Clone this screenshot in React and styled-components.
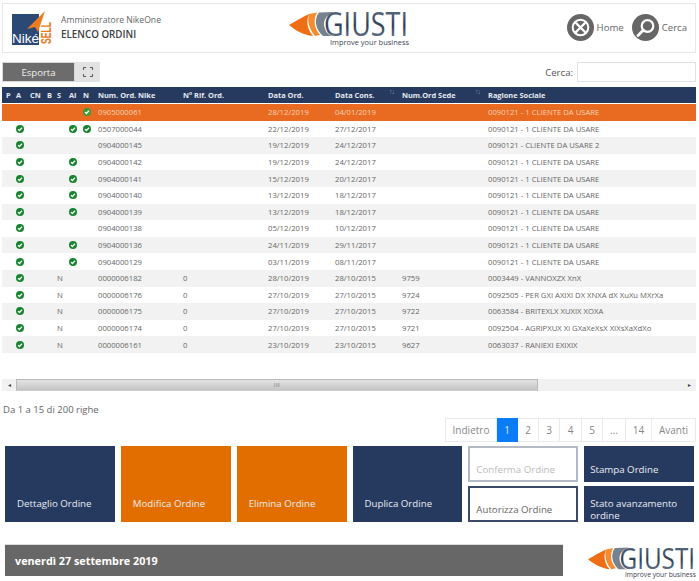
import React from 'react';
import styled, { createGlobalStyle } from 'styled-components';

const GlobalStyle = createGlobalStyle`
  html, body {
    margin: 0;
    padding: 0;
    background: #fff;
    overflow: hidden;
    font-family: "Open Sans", "Liberation Sans", sans-serif;
  }
  * { box-sizing: border-box; }
`;

const Page = styled.div`
  width: 699px;
  height: 581px;
  padding-top: 3px;
  overflow: hidden;
`;

const Header = styled.header`
  margin: 0 3px 0 2px;
  height: 50px;
  border: 1px solid #e8e8e8;
  display: grid;
  grid-template-columns: 1fr auto 1fr;
  align-items: center;
`;

const Brand = styled.div`
  display: flex;
  align-items: center;
  gap: 7px;
  padding-left: 9px;
`;

const UserInfo = styled.div`
  display: flex;
  flex-direction: column;
  gap: 2px;
  margin-top: -2px;
`;

const UserName = styled.div`
  font-size: 8.6px;
  line-height: 12px;
  color: #666;
`;

const PageTitle = styled.div`
  font-size: 9.8px;
  line-height: 13px;
  font-weight: 600;
  color: #3c4043;
`;

const HeaderNav = styled.nav`
  display: flex;
  justify-content: flex-end;
  align-items: center;
  gap: 8px;
  padding-right: 8px;
  margin-top: -1px;
`;

const NavItem = styled.a`
  display: flex;
  align-items: center;
  gap: 3px;
  font-size: 9.6px;
  color: #666;
`;

const Toolbar = styled.div`
  margin: 9px 3px 0 2px;
  height: 20px;
  display: flex;
  align-items: stretch;
`;

const ExportButton = styled.button`
  width: 73px;
  border: 1px solid #d8d8d8;
  background: #6c6c6c;
  color: #eee;
  font-family: inherit;
  font-size: 9.6px;
  padding: 0;
`;

const ExpandButton = styled.button`
  width: 25px;
  border: 0;
  background: #e2e2e2;
  display: flex;
  align-items: center;
  justify-content: center;
  padding: 0;
`;

const SearchBox = styled.label`
  margin-left: auto;
  display: flex;
  align-items: center;
  gap: 4px;
  font-size: 9.6px;
  color: #555;
`;

const SearchInput = styled.input`
  width: 119px;
  height: 20px;
  border: 1px solid #e2e2e2;
  background: #fff;
  padding: 0;
`;

const Table = styled.div`
  margin: 5px 3px 0 2px;
`;

const COLUMNS = '10px 14px 17px 10px 12px 14px 15px 85px 85px 67px 67px 86px 1fr';

const HeadRow = styled.div`
  display: grid;
  grid-template-columns: ${COLUMNS};
  height: 16px;
  padding-left: 2px;
  margin-bottom: 1px;
  background: #253a5e;
  color: #e6e9ef;
  font-size: 7.4px;
  font-weight: 700;
  align-items: center;
`;

const HeadCell = styled.div`
  padding-left: 2px;
  white-space: nowrap;
  display: flex;
  justify-content: space-between;
  padding-right: 6px;
`;

const SortMark = styled.span`
  color: #8794ab;
  font-weight: 400;
  font-size: 7px;
  letter-spacing: -1px;
  margin-top: -3px;
`;

const Row = styled.div`
  display: grid;
  grid-template-columns: ${COLUMNS};
  height: 16.6px;
  padding-left: 2px;
  align-items: center;
  font-size: 7.7px;
  color: ${(p) => (p.$active ? '#f8d3b6' : '#666')};
  background: ${(p) => {
    if (p.$active) return '#e96a21';
    return p.$striped ? '#f2f2f2' : '#fff';
  }};
`;

const Cell = styled.div`
  padding-left: 2px;
  white-space: nowrap;
  display: flex;
  align-items: center;
`;

const HScroll = styled.div`
  margin: 26px 3px 0 2px;
  height: 12px;
  background: #f1f1f1;
  display: grid;
  grid-template-columns: 14px 522px 1fr 14px;
  align-items: stretch;
`;

const ScrollArrow = styled.div`
  display: flex;
  align-items: center;
  justify-content: center;
  font-size: 6px;
  color: #444;
`;

const ScrollThumb = styled.div`
  border: 1px solid #b9b9b9;
  border-bottom-color: #ccc;
  background: linear-gradient(#e4e4e4, #c4c4c4);
  display: flex;
  align-items: center;
  justify-content: center;
  font-size: 6px;
  color: #666;
  letter-spacing: 0.5px;
`;

const Info = styled.div`
  margin: 12px 0 0 3px;
  height: 14px;
  line-height: 14px;
  font-size: 9.5px;
  color: #666;
`;

const Pagination = styled.div`
  display: flex;
  justify-content: flex-end;
  margin: 1px 3px 0 0;
  height: 24px;
`;

const PageLink = styled.a`
  width: ${(p) => p.$w}px;
  display: flex;
  align-items: center;
  justify-content: center;
  font-size: 10px;
  color: ${(p) => (p.$current ? '#dbeaff' : '#888')};
  background: ${(p) => (p.$current ? '#0a7cf5' : '#fff')};
  border: 1px solid ${(p) => (p.$current ? '#0a7cf5' : '#eaeaea')};
  border-left-width: ${(p) => (p.$first ? 1 : 0)}px;
`;

const Actions = styled.div`
  margin: 4px 5px 0 5px;
  height: 76px;
  display: grid;
  grid-template-columns: repeat(6, 1fr);
  column-gap: 6px;
`;

const ActionStack = styled.div`
  display: grid;
  grid-template-rows: 36px 36px;
  row-gap: 4px;
`;

const ActionTile = styled.a`
  display: flex;
  align-items: center;
  overflow: hidden;
  font-size: 9.7px;
  line-height: 12px;
  padding-left: ${(p) => (p.$small ? 6 : 12)}px;
  padding-top: ${(p) => (p.$small ? 12 : 40)}px;
  padding-right: 4px;
  color: #e8edf4;
  background: ${(p) => (p.$accent ? '#e36e00' : '#26395f')};
`;

const OutlineTile = styled.a`
  display: flex;
  align-items: center;
  font-size: 9.7px;
  padding: 12px 0 0 6px;
  background: #fff;
  color: ${(p) => (p.$disabled ? '#bbb' : '#666')};
  border: 2px solid ${(p) => (p.$disabled ? '#b3bac4' : '#3a4a68')};
`;

const Footer = styled.footer`
  margin: 22px 2px 0 5px;
  display: flex;
  justify-content: space-between;
  align-items: flex-start;
`;

const DateBar = styled.div`
  width: 558px;
  height: 32px;
  padding-left: 10px;
  display: flex;
  align-items: center;
  background: #676767;
  border-top: 1px solid #ddd;
  color: #fff;
  font-size: 10.8px;
  font-weight: 700;
`;

const Check = ({ soft }) => (
  <svg width="8" height="8" viewBox="0 0 16 16">
    <circle cx="8" cy="8" r="8" fill={soft ? '#3d9a37' : '#17842f'} />
    <path d="M4 8.3l2.8 2.8L12 5.6" fill="none" stroke="#fff" strokeWidth="2.6" />
  </svg>
);

const GiustiLogo = ({ width, height, id }) => (
  <svg width={width} height={height} viewBox="0 0 122 40">
    <defs>
      <linearGradient id={id} x1="0" y1="0" x2="0" y2="1">
        <stop offset="0" stopColor="#6f8094" />
        <stop offset="0.55" stopColor="#2f3f54" />
        <stop offset="1" stopColor="#8497ac" />
      </linearGradient>
    </defs>
    <path d="M1 17C8 13 14 9 21 6 18 13 19 21 25 28 15 27 7 22 1 17z" fill="#ef6d14" />
    <path d="M21 6l8-1.500C25 12 26 20 32 27l-5 1C21 21 19 13 21 6z" fill="#f58a2e" />
    <path d="M31 4.500L46 4C38 7 34 13 37 21c1.500 4 4 6 7 7l-9 0C27 21 26 11 31 4.500z" fill="#76828f" />
    <text
      x="36"
      y="28"
      fontFamily="'Open Sans', sans-serif"
      fontWeight="400"
      fontSize="32"
      textLength="84"
      lengthAdjust="spacingAndGlyphs"
      fill={`url(#${id})`}
    >
      GIUSTI
    </text>
    <text
      x="42"
      y="37"
      fontFamily="'Open Sans', sans-serif"
      fontSize="8"
      textLength="79"
      lengthAdjust="spacingAndGlyphs"
      fill="#3c4654"
    >
      Improve your business
    </text>
  </svg>
);

const NikeLogo = () => (
  <svg width="42" height="36" viewBox="0 0 42 36">
    <rect x="0" y="4" width="27" height="31" fill="#2c4875" />
    <path d="M33 1L15 19l8-2 3 5z" fill="#ee7d1f" />
    <text
      x="0"
      y="33"
      fontFamily="'Liberation Sans', sans-serif"
      fontSize="13"
      fill="#fff"
      textLength="27"
      lengthAdjust="spacingAndGlyphs"
    >
      Niké
    </text>
    <text
      x="0"
      y="0"
      transform="translate(39 34) rotate(-90)"
      fontFamily="'Liberation Sans', sans-serif"
      fontSize="14"
      fontWeight="700"
      fill="#e9791d"
      textLength="22"
      lengthAdjust="spacingAndGlyphs"
    >
      SELL
    </text>
  </svg>
);

const HomeIcon = () => (
  <svg width="27" height="27" viewBox="0 0 27 27">
    <circle cx="13.500" cy="13.500" r="13.500" fill="#666" />
    <circle cx="13.500" cy="13.500" r="7.800" fill="none" stroke="#fff" strokeWidth="2" />
    <path d="M8 8l11 11M19 8L8 19" stroke="#fff" strokeWidth="2.400" />
  </svg>
);

const SearchIcon = () => (
  <svg width="27" height="27" viewBox="0 0 27 27">
    <circle cx="13.500" cy="13.500" r="13.500" fill="#666" />
    <circle cx="15.500" cy="12" r="5.800" fill="none" stroke="#fff" strokeWidth="2.200" />
    <path d="M11 16.500l-5 5" stroke="#fff" strokeWidth="2.800" strokeLinecap="round" />
  </svg>
);

const ExpandIcon = () => (
  <svg width="10" height="10" viewBox="0 0 10 10" fill="none" stroke="#555" strokeWidth="1">
    <path d="M.5 3V.5H3M7 .5h2.500V3M9.500 7v2.500H7M3 9.500H.5V7" />
  </svg>
);

const HEAD = ['P', 'A', 'CN', 'B', 'S', 'AI', 'N', 'Num. Ord. Nike', 'N° Rif. Ord.', 'Data Ord.', 'Data Cons.', 'Num.Ord Sede', 'Ragione Sociale'];
const CLIENT = '0090121 - 1 CLIENTE DA USARE';

const ROWS = [
  { flags: ['n'], num: '0905000061', ord: '28/12/2019', cons: '04/01/2019', name: CLIENT },
  { flags: ['a', 'ai', 'n'], num: '0507000044', ord: '22/12/2019', cons: '27/12/2017', name: CLIENT },
  { flags: ['a'], num: '0904000145', ord: '19/12/2019', cons: '24/12/2017', name: '0090121 - CLIENTE DA USARE 2' },
  { flags: ['a', 'ai'], num: '0904000142', ord: '19/12/2019', cons: '24/12/2017', name: CLIENT },
  { flags: ['a', 'ai'], num: '0904000141', ord: '15/12/2019', cons: '20/12/2017', name: CLIENT },
  { flags: ['a', 'ai'], num: '0904000140', ord: '13/12/2019', cons: '18/12/2017', name: CLIENT },
  { flags: ['a', 'ai'], num: '0904000139', ord: '13/12/2019', cons: '18/12/2017', name: CLIENT },
  { flags: ['a'], num: '0904000138', ord: '05/12/2019', cons: '10/12/2017', name: CLIENT },
  { flags: ['a', 'ai'], num: '0904000136', ord: '24/11/2019', cons: '29/11/2017', name: CLIENT },
  { flags: ['a', 'ai'], num: '0904000129', ord: '03/11/2019', cons: '08/11/2017', name: CLIENT },
  { flags: ['a'], s: 'N', num: '0000006182', rif: '0', ord: '28/10/2019', cons: '28/10/2015', sede: '9759', name: '0003449 - VANNOXZX XnX' },
  { flags: ['a'], s: 'N', num: '0000006176', rif: '0', ord: '27/10/2019', cons: '27/10/2015', sede: '9724', name: '0092505 - PER GXI AXIXI DX XNXA dX XuXu MXrXa' },
  { flags: ['a'], s: 'N', num: '0000006175', rif: '0', ord: '27/10/2019', cons: '27/10/2015', sede: '9722', name: '0063584 - BRITEXLX XUXIX XOXA' },
  { flags: ['a'], s: 'N', num: '0000006174', rif: '0', ord: '27/10/2019', cons: '27/10/2015', sede: '9721', name: '0092504 - AGRIPXUX Xi GXaXeXsX XIXsXaXdXo' },
  { flags: ['a'], s: 'N', num: '0000006161', rif: '0', ord: '23/10/2019', cons: '23/10/2015', sede: '9627', name: '0063037 - RANIEXI EXIXIX' },
];

const PAGES = [
  { label: 'Indietro', w: 52, first: true },
  { label: '1', w: 21, current: true },
  { label: '2', w: 21 },
  { label: '3', w: 21 },
  { label: '4', w: 22 },
  { label: '5', w: 21 },
  { label: '...', w: 23 },
  { label: '14', w: 26 },
  { label: 'Avanti', w: 44 },
];

const App = () => (
  <Page>
    <GlobalStyle />

    <Header>
      <Brand>
        <NikeLogo />
        <UserInfo>
          <UserName>Amministratore NikeOne</UserName>
          <PageTitle>ELENCO ORDINI</PageTitle>
        </UserInfo>
      </Brand>

      <GiustiLogo width={122} height={40} id="giusti-top" />

      <HeaderNav>
        <NavItem>
          <HomeIcon />
          Home
        </NavItem>
        <NavItem>
          <SearchIcon />
          Cerca
        </NavItem>
      </HeaderNav>
    </Header>

    <Toolbar>
      <ExportButton>Esporta</ExportButton>
      <ExpandButton>
        <ExpandIcon />
      </ExpandButton>
      <SearchBox>
        Cerca:
        <SearchInput />
      </SearchBox>
    </Toolbar>

    <Table>
      <HeadRow>
        {HEAD.map((label) => (
          <HeadCell key={label}>
            {label}
            {(label === 'Data Cons.' || label === 'Num.Ord Sede') && <SortMark>↑↓</SortMark>}
          </HeadCell>
        ))}
      </HeadRow>

      {ROWS.map((row, index) => (
        <Row key={row.num} $active={index === 0} $striped={index % 2 === 0}>
          <Cell />
          <Cell>{row.flags.includes('a') && <Check />}</Cell>
          <Cell />
          <Cell />
          <Cell>{row.s}</Cell>
          <Cell>{row.flags.includes('ai') && <Check />}</Cell>
          <Cell>{row.flags.includes('n') && <Check soft={index === 0} />}</Cell>
          <Cell>{row.num}</Cell>
          <Cell>{row.rif}</Cell>
          <Cell>{row.ord}</Cell>
          <Cell>{row.cons}</Cell>
          <Cell>{row.sede}</Cell>
          <Cell>{row.name}</Cell>
        </Row>
      ))}
    </Table>

    <HScroll>
      <ScrollArrow>◂</ScrollArrow>
      <ScrollThumb>III</ScrollThumb>
      <div />
      <ScrollArrow>▸</ScrollArrow>
    </HScroll>

    <Info>Da 1 a 15 di 200 righe</Info>

    <Pagination>
      {PAGES.map((item) => (
        <PageLink key={item.label} $w={item.w} $current={item.current} $first={item.first}>
          {item.label}
        </PageLink>
      ))}
    </Pagination>

    <Actions>
      <ActionTile>Dettaglio Ordine</ActionTile>
      <ActionTile $accent>Modifica Ordine</ActionTile>
      <ActionTile $accent>Elimina Ordine</ActionTile>
      <ActionTile>Duplica Ordine</ActionTile>
      <ActionStack>
        <OutlineTile $disabled>Conferma Ordine</OutlineTile>
        <OutlineTile>Autorizza Ordine</OutlineTile>
      </ActionStack>
      <ActionStack>
        <ActionTile $small>Stampa Ordine</ActionTile>
        <ActionTile $small>Stato avanzamento ordine</ActionTile>
      </ActionStack>
    </Actions>

    <Footer>
      <DateBar>venerdì 27 settembre 2019</DateBar>
      <GiustiLogo width={110} height={36} id="giusti-bottom" />
    </Footer>
  </Page>
);

export default App;
